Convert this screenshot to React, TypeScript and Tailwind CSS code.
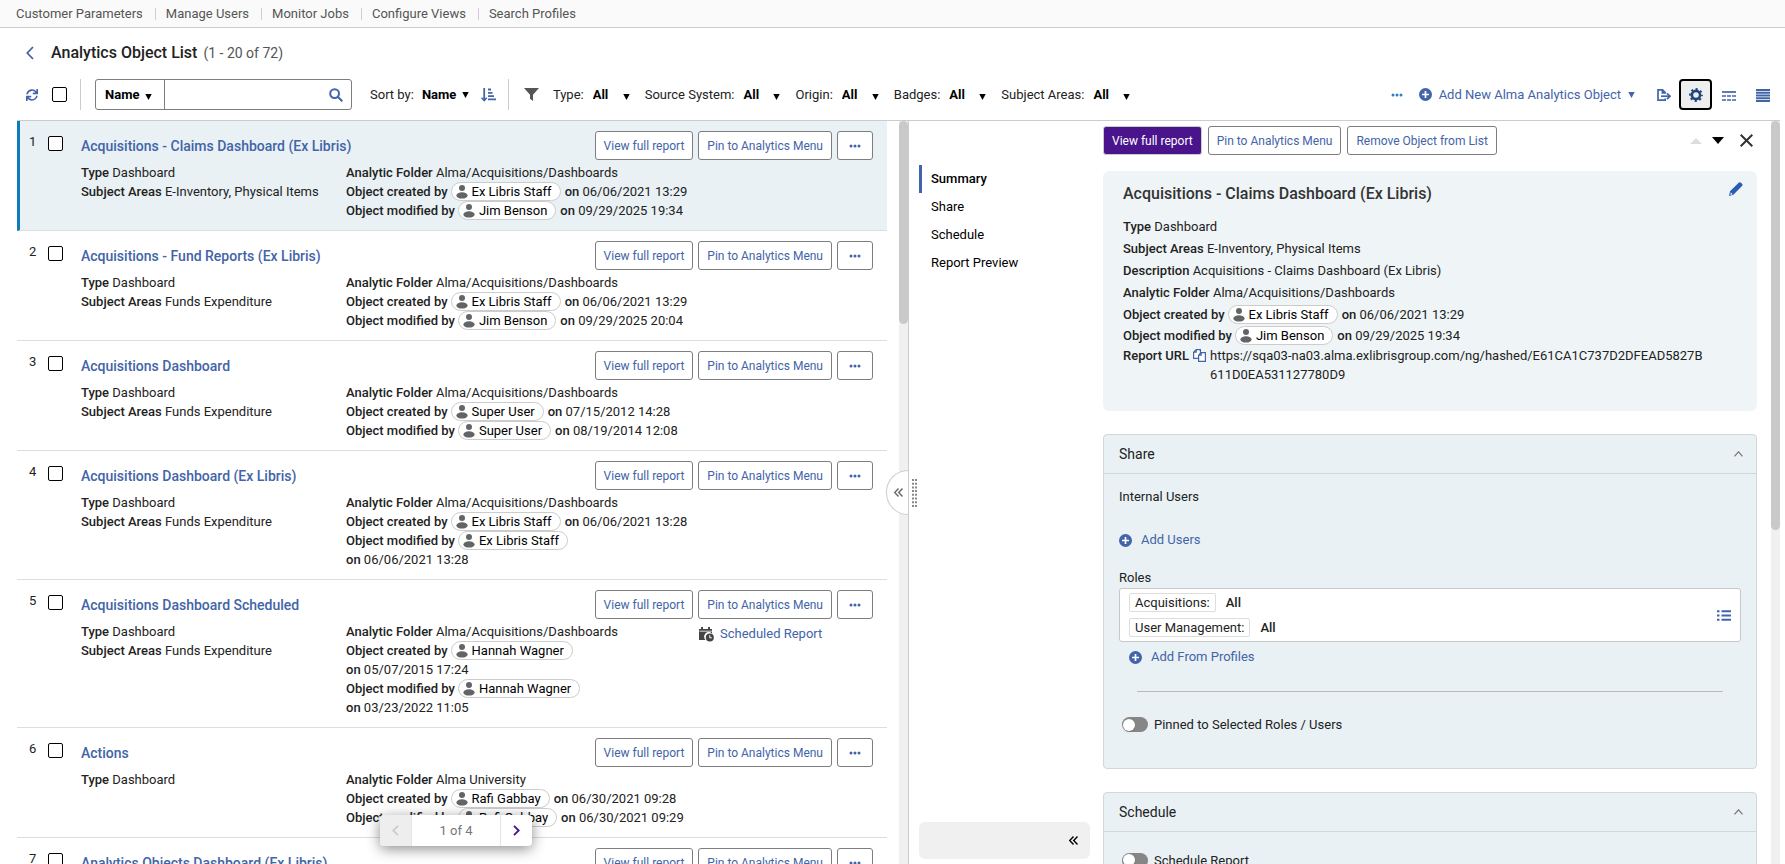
import type { ReactNode } from "react";
import { FaSync } from "react-icons/fa";

type Item = {
  title: string;
  areas?: string;
  folder: string;
  creator: string;
  created: string;
  editor: string;
  modified: string;
  scheduled?: boolean;
};

const items: Item[] = [
  { title: "Acquisitions - Claims Dashboard (Ex Libris)", areas: "E-Inventory, Physical Items", folder: "Alma/Acquisitions/Dashboards", creator: "Ex Libris Staff", created: "06/06/2021 13:29", editor: "Jim Benson", modified: "09/29/2025 19:34" },
  { title: "Acquisitions - Fund Reports (Ex Libris)", areas: "Funds Expenditure", folder: "Alma/Acquisitions/Dashboards", creator: "Ex Libris Staff", created: "06/06/2021 13:29", editor: "Jim Benson", modified: "09/29/2025 20:04" },
  { title: "Acquisitions Dashboard", areas: "Funds Expenditure", folder: "Alma/Acquisitions/Dashboards", creator: "Super User", created: "07/15/2012 14:28", editor: "Super User", modified: "08/19/2014 12:08" },
  { title: "Acquisitions Dashboard (Ex Libris)", areas: "Funds Expenditure", folder: "Alma/Acquisitions/Dashboards", creator: "Ex Libris Staff", created: "06/06/2021 13:28", editor: "Ex Libris Staff", modified: "06/06/2021 13:28" },
  { title: "Acquisitions Dashboard Scheduled", areas: "Funds Expenditure", folder: "Alma/Acquisitions/Dashboards", creator: "Hannah Wagner", created: "05/07/2015 17:24", editor: "Hannah Wagner", modified: "03/23/2022 11:05", scheduled: true },
  { title: "Actions", folder: "Alma University", creator: "Rafi Gabbay", created: "06/30/2021 09:28", editor: "Rafi Gabbay", modified: "06/30/2021 09:29" },
  { title: "Analytics Objects Dashboard (Ex Libris)", areas: "Funds Expenditure", folder: "Alma/Acquisitions/Dashboards", creator: "Ex Libris Staff", created: "06/06/2021 13:28", editor: "Ex Libris Staff", modified: "06/06/2021 13:28" },
];

const outline =
  "flex h-[29px] shrink-0 items-center whitespace-nowrap rounded-[3px] border border-[#7d7d7d] bg-white text-xs text-[#4264a8]";

function Caret({ className = "" }: { className?: string }) {
  return (
    <svg width="7" height="6" viewBox="0 0 7 6" className={`pointer-events-none shrink-0 ${className}`} fill="currentColor">
      <path d="M.3 0h6.4L3.5 6z" />
    </svg>
  );
}

function PlusCircle() {
  return (
    <svg width="13" height="13" viewBox="0 0 13 13" className="shrink-0">
      <circle cx="6.5" cy="6.5" r="6.5" fill="#4264a8" />
      <path d="M6.5 3v7M3 6.5h7" stroke="#fff" strokeWidth="1.7" />
    </svg>
  );
}

function Dots() {
  return (
    <svg width="12" height="4" viewBox="0 0 12 4" fill="currentColor">
      <circle cx="2" cy="2" r="1.5" />
      <circle cx="6" cy="2" r="1.5" />
      <circle cx="10" cy="2" r="1.5" />
    </svg>
  );
}

function Guillemet() {
  return (
    <svg width="9" height="9" viewBox="0 0 9 9" fill="none" stroke="currentColor" strokeWidth="1.4">
      <path d="M4.5.5l-3.8 4 3.8 4M8.5.5l-3.8 4 3.8 4" />
    </svg>
  );
}

function Person({ name }: { name: string }) {
  return (
    <span className="ml-[3px] mr-1 inline-flex h-[19px] items-center gap-1 rounded-full border border-[#ccc] bg-white pl-1 pr-2 align-top text-black">
      <svg width="12" height="14" viewBox="0 0 12 14" fill="#636466">
        <circle cx="6" cy="3" r="3" />
        <ellipse cx="6" cy="10.4" rx="5.6" ry="3.2" />
      </svg>
      {name}
    </span>
  );
}

function Authored({ label, name, date }: { label: string; name: string; date: string }) {
  return (
    <>
      <b className="font-medium">{label}</b>
      <Person name={name} />
      <span className="inline-block whitespace-nowrap">
        <b className="font-medium">on</b> {date}
      </span>
    </>
  );
}

function Checkbox({ label }: { label: string }) {
  return (
    <input type="checkbox" aria-label={label} className="block size-[15px] shrink-0 appearance-none rounded-[2px] border border-black bg-white checked:bg-[#4264a8]" />
  );
}

function ScrollBar({ thumb }: { thumb: ReactNode }) {
  return <div className="w-[9px] shrink-0 bg-[#f0f0f0]">{thumb}</div>;
}

function Row({ item, n, selected }: { item: Item; n: number; selected: boolean }) {
  return (
    <li className={`flex border-b border-[#ddd] pb-2.5 pr-3.5 pt-2.5 ${selected ? "border-l-3 border-l-[#0f7bbd] bg-[#e9f1f4] pl-[9px]" : "pl-3"}`}>
      <span className="w-[19px] shrink-0 pt-px leading-5">{n}</span>
      <div className="shrink-0 pt-[5px]">
        <Checkbox label={`Select ${item.title}`} />
      </div>
      <div className="ml-[18px] min-w-0 grow">
        <div className="flex items-center gap-[5px]">
          <h2 className="grow text-sm font-medium text-[#4264a8]">
            <a href="#summary">{item.title}</a>
          </h2>
          <button className={`${outline} px-2`}>View full report</button>
          <button className={`${outline} px-2`}>Pin to Analytics Menu</button>
          <button aria-label="More actions" className={`${outline} px-[11px]`}>
            <Dots />
          </button>
        </div>
        <div className="mt-[3px] grid grid-cols-[265fr_352fr_175fr] leading-[19px]">
          <div>
            <p>
              <b className="font-medium">Type</b> Dashboard
            </p>
            {item.areas && (
              <p>
                <b className="font-medium">Subject Areas</b> {item.areas}
              </p>
            )}
          </div>
          <div className="pr-1.5">
            <p>
              <b className="font-medium">Analytic Folder</b> {item.folder}
            </p>
            <p>
              <Authored label="Object created by" name={item.creator} date={item.created} />
            </p>
            <p>
              <Authored label="Object modified by" name={item.editor} date={item.modified} />
            </p>
          </div>
          <div>
            {item.scheduled && (
              <a href="#schedule" className="flex items-center gap-1.5 pl-px pt-0.5 text-[#4264a8]">
                <svg width="15" height="16" viewBox="0 0 15 16" fill="#444">
                  <path d="M0 3h2V1h2v2h5V1h2v2h2v4.4A4.6 4.6 0 0 0 6.5 14H0z" />
                  <path d="M.5 5.2h12.4" stroke="#fff" strokeWidth=".8" />
                  <circle cx="10.8" cy="11.6" r="4" />
                  <path d="M10.8 9.2v2.6h2" stroke="#fff" strokeWidth="1" fill="none" />
                </svg>
                Scheduled Report
              </a>
            )}
          </div>
        </div>
      </div>
    </li>
  );
}

function Filter({ label }: { label: string }) {
  return (
    <label className="flex items-center">
      <span className="mr-[9px]">{label}:</span>
      <select className="w-[30px] appearance-none font-bold text-black">
        <option>All</option>
      </select>
      <Caret className="mt-1 text-black" />
    </label>
  );
}

function Toggle({ label }: { label: string }) {
  return (
    <label className="flex items-center gap-1.5">
      <input
        type="checkbox"
        role="switch"
        className="flex h-[15px] w-[26px] appearance-none items-center rounded-full bg-[#868686] before:size-3 before:translate-x-px before:rounded-full before:bg-white before:shadow before:content-[''] checked:bg-[#4264a8] checked:before:translate-x-3"
      />
      {label}
    </label>
  );
}

function Section({ id, title, children }: { id: string; title: string; children: ReactNode }) {
  return (
    <section id={id} className="mt-[23px] rounded border border-[#d0d8db] bg-[#e9f1f4]">
      <button className="flex h-[39px] w-full items-center justify-between border-b border-[#d0d8db] px-[15px] text-sm">
        {title}
        <svg width="9" height="6" viewBox="0 0 9 6" fill="none" stroke="#777" strokeWidth="1.2" className="mr-[-2px]">
          <path d="M.5 5.3l4-4.5 4 4.5" />
        </svg>
      </button>
      {children}
    </section>
  );
}

function Role({ name }: { name: string }) {
  return (
    <div className="flex items-center gap-2.5 leading-[17px]">
      <span className="rounded-[2px] border border-[#ddd] px-[5px]">{name}:</span>
      <b className="font-medium">All</b>
    </div>
  );
}

const links = ["Customer Parameters", "Manage Users", "Monitor Jobs", "Configure Views", "Search Profiles"];

export default function App() {
  return (
    <div className="flex h-screen flex-col overflow-hidden bg-white font-[Roboto,sans-serif] text-[13px] text-[#222]">
      <nav className="flex h-7 shrink-0 items-center border-b border-[#ccc] bg-[#fafafa] pl-4 text-[#555]">
        {links.map((l, i) => (
          <div key={l} className="flex items-center">
            {i > 0 && <span className="ml-3 mr-2.5 h-3 w-px bg-[#ccd]" />}
            <a href="#top">{l}</a>
          </div>
        ))}
      </nav>

      <header className="shrink-0 pl-[17px] pr-[5px]">
        <div className="flex h-[49px] items-center pl-[9px]">
          <button aria-label="Back">
            <svg width="8" height="14" viewBox="0 0 8 14" fill="none" stroke="#4264a8" strokeWidth="1.8">
              <path d="M7 1L1.3 7 7 13" />
            </svg>
          </button>
          <h1 className="ml-[17px] text-base font-medium">Analytics Object List</h1>
          <span className="ml-1.5 text-sm text-[#555]">(1 - 20 of 72)</span>
        </div>

        <div className="flex items-center border-b border-[#ccc] pb-2.5 pl-[9px] pr-2.5 pt-0.5">
          <button aria-label="Refresh" className="mr-3.5">
            <FaSync size={12} color="#4264a8" />
          </button>
          <Checkbox label="Select all" />
          <span className="ml-[13px] mr-3.5 h-[31px] w-px bg-[#ccc]" />
          <div className="flex h-[31px] w-[257px] items-center rounded-[3px] border border-[#7d7d7d]">
            <span className="flex h-full w-[69px] shrink-0 items-center border-r border-[#7d7d7d] pl-[9px]">
              <select aria-label="Search field" className="w-10 appearance-none font-bold text-black">
                <option>Name</option>
              </select>
              <Caret className="mt-1 text-black" />
            </span>
            <input aria-label="Search" className="h-full min-w-0 grow px-2 outline-none" />
            <button aria-label="Run search" className="mr-2">
              <svg width="14" height="14" viewBox="0 0 14 14" fill="none" stroke="#4264a8" strokeWidth="2">
                <circle cx="5.6" cy="5.6" r="4.4" />
                <path d="M9 9l4.3 4.3" />
              </svg>
            </button>
          </div>
          <label className="ml-[18px] flex items-center">
            <span className="mr-2">Sort by:</span>
            <select className="w-10 appearance-none font-bold text-black">
              <option>Name</option>
            </select>
            <Caret className="text-black" />
          </label>
          <button aria-label="Sort direction" className="ml-3">
            <svg width="15" height="14" viewBox="0 0 15 14" fill="none" stroke="#4264a8">
              <path d="M3.2 0v12" strokeWidth="1.8" />
              <path d="M.6 9.8l2.6 2.8 2.6-2.8" strokeWidth="1.5" />
              <path d="M7 1.5h3M7 4.8h4.5M7 8.1h6M7 11.4h8" strokeWidth="1.8" />
            </svg>
          </button>
          <span className="ml-3 mr-[15px] h-[31px] w-px bg-[#ccc]" />
          <svg width="15" height="13" viewBox="0 0 15 13" fill="#555" className="mr-3.5">
            <path d="M0 0h15L9 6.8V13l-3-2.2v-4z" />
          </svg>
          <div className="flex items-center gap-[15px]">
            {["Type", "Source System", "Origin", "Badges", "Subject Areas"].map((f) => (
              <Filter key={f} label={f} />
            ))}
          </div>
          <button aria-label="More" className="ml-auto mr-4 text-[#2f7fc0]">
            <Dots />
          </button>
          <button className="flex items-center text-[#4264a8]">
            <PlusCircle />
            <span className="mx-[7px]">Add New Alma Analytics Object</span>
            <Caret />
          </button>
          <button aria-label="Export" className="ml-[22px]">
            <svg width="14" height="12" viewBox="0 0 14 12" fill="none" stroke="#4264a8" strokeWidth="1.7">
              <path d="M8.2 9.5v1.6H1V.9h4.6l2.6 2.6v1.3M5.4 1v2.8h2.8" />
              <path d="M4 7.2h8" />
              <path d="M10 4.3l3 2.9-3 2.9" />
            </svg>
          </button>
          <button aria-label="Settings" className="ml-2 flex h-[31px] w-[33px] items-center justify-center rounded-[4px] border-2 border-black bg-[#eee]">
            <svg width="14" height="14" viewBox="0 0 14 14" fill="none" stroke="#1d447e">
              <circle cx="7" cy="7" r="4.1" strokeWidth="2.6" />
              <circle cx="7" cy="7" r="6" strokeWidth="1.8" strokeDasharray="2.2 2.512" strokeDashoffset="1.1" />
            </svg>
          </button>
          <button aria-label="Compact view" className="ml-[10px] pt-0.5">
            <svg width="14" height="10" viewBox="0 0 14 10" fill="none" stroke="#4264a8" strokeWidth="1.7">
              <path d="M0 1h14" />
              <path d="M0 5h4M5 5h4M10 5h4M0 9h4M5 9h4M10 9h4" />
            </svg>
          </button>
          <button aria-label="List view" className="ml-5 pt-0.5">
            <svg width="14" height="13" viewBox="0 0 14 13" stroke="#4264a8" strokeWidth="1.8">
              <path d="M0 1h14M0 3.75h14M0 6.5h14M0 9.25h14M0 12h14" />
            </svg>
          </button>
        </div>
      </header>

      <main className="flex min-h-0 grow pl-[17px] pr-[5px]">
        <div className="relative flex min-w-0 flex-1 border-r border-[#ccc]">
          <ul className="min-w-0 grow overflow-hidden">
            {items.map((item, i) => (
              <Row key={item.title} item={item} n={i + 1} selected={i === 0} />
            ))}
          </ul>
          <div className="w-3 shrink-0" />
          <ScrollBar thumb={<div className="h-[203px] rounded-full bg-[#c9c9c9]" />} />
          <button aria-label="Collapse list" className="absolute right-0 top-[349px] flex h-[45px] w-[22px] items-center rounded-l-full border border-r-0 border-[#ccc] bg-white pl-[7px] text-[#666]">
            <Guillemet />
          </button>
          <div className="absolute bottom-[18px] left-[363px] flex h-[31px] w-[152px] items-stretch rounded bg-white shadow-[0_3px_14px_rgba(0,0,0,0.45)]">
            <button aria-label="Previous page" disabled className="flex w-[31px] items-center justify-center rounded-l bg-[#eee]">
              <svg width="7" height="11" viewBox="0 0 7 11" fill="none" stroke="#ccc" strokeWidth="1.8">
                <path d="M6 .8L1.3 5.5 6 10.2" />
              </svg>
            </button>
            <span className="flex grow items-center justify-center border-x border-[#e4e4e4] text-[#777]">1 of 4</span>
            <button aria-label="Next page" className="flex w-[31px] items-center justify-center">
              <svg width="7" height="11" viewBox="0 0 7 11" fill="none" stroke="#4a148c" strokeWidth="1.9">
                <path d="M1 .8l4.7 4.7L1 10.2" />
              </svg>
            </button>
          </div>
        </div>

        <div className="flex w-[871px] shrink-0">
          <div className="flex w-2.5 shrink-0 flex-col pl-[3px] pt-[358px]">
            <svg width="5" height="28" viewBox="0 0 5 28" stroke="#888" strokeWidth="2" strokeDasharray="2 1.7">
              <path d="M1 0v28M4 0v28" />
            </svg>
          </div>
          <aside className="flex w-[171px] shrink-0 flex-col pb-[5px] pt-11 text-black">
            {["Summary", "Share", "Schedule", "Report Preview"].map((s, i) => (
              <a key={s} href={`#${s.split(" ")[0].toLowerCase()}`} className={`flex h-7 shrink-0 items-center border-l-3 pl-[9px] ${i === 0 ? "border-[#4264a8] font-medium" : "border-transparent"}`}>
                {s}
              </a>
            ))}
            <button aria-label="Collapse navigation" className="mt-auto flex h-[37px] items-center justify-end rounded-md bg-[#f0f0f0] pr-3">
              <Guillemet />
            </button>
          </aside>

          <div className="ml-[13px] min-w-0 grow overflow-hidden pt-[5px]">
            <div className="flex items-center gap-1.5">
              <button className="flex h-[29px] items-center rounded-[3px] border border-[#ccc] bg-[#4a148c] px-2 text-xs text-white">View full report</button>
              <button className={`${outline} px-2`}>Pin to Analytics Menu</button>
              <button className={`${outline} px-2`}>Remove Object from List</button>
              <button aria-label="Previous object" className="ml-auto mr-1">
                <svg width="12" height="6" viewBox="0 0 12 6" fill="#ddd">
                  <path d="M0 6h12L6 0z" />
                </svg>
              </button>
              <button aria-label="Next object">
                <svg width="12" height="7" viewBox="0 0 12 7" fill="#000">
                  <path d="M0 0h12L6 7z" />
                </svg>
              </button>
              <button aria-label="Close" className="ml-2.5 mr-1">
                <svg width="13" height="13" viewBox="0 0 13 13" stroke="#333" strokeWidth="2">
                  <path d="M.7.7l11.6 11.6M12.3.7L.7 12.3" />
                </svg>
              </button>
            </div>

            <section id="summary" className="mt-4 rounded-md bg-[#eff5f7] px-5 pb-[27px] pt-[11px]">
              <div className="flex items-start justify-between">
                <h2 className="text-base font-medium leading-6 text-[#333]">Acquisitions - Claims Dashboard (Ex Libris)</h2>
                <button aria-label="Edit" className="mr-[-6px]">
                  <svg width="14" height="14" viewBox="0 0 14 14" fill="#2a5bb5">
                    <path d="M1 9.3L9.7.8c.8-.8 1.6-.7 2.3 0l1 1c.7.7.7 1.5 0 2.3L4.4 12.7 0 14z" />
                    <path d="M1.7 10.3l2 2-2.2.7z" fill="#eff5f7" />
                  </svg>
                </button>
              </div>
              <div className="mt-2.5 leading-[22px]">
                <p>
                  <b className="font-medium">Type</b> Dashboard
                </p>
                <p>
                  <b className="font-medium">Subject Areas</b> E-Inventory, Physical Items
                </p>
                <p>
                  <b className="font-medium">Description</b> Acquisitions - Claims Dashboard (Ex Libris)
                </p>
                <p>
                  <b className="font-medium">Analytic Folder</b> Alma/Acquisitions/Dashboards
                </p>
                <p className="flex h-[21px] items-center">
                  <Authored label="Object created by" name="Ex Libris Staff" date="06/06/2021 13:29" />
                </p>
                <p className="flex h-[21px] items-center">
                  <Authored label="Object modified by" name="Jim Benson" date="09/29/2025 19:34" />
                </p>
                <div className="flex leading-[19px]">
                  <b className="font-medium">Report URL</b>
                  <button aria-label="Copy URL" className="mx-1 self-start pt-[3px]">
                    <svg width="13" height="13" viewBox="0 0 13 13" fill="#fff" stroke="#4264a8" strokeWidth="1.2">
                      <path d="M3.2.6h4.2v8.8H.6V3.2zM3.2.6v2.6H.6" />
                      <path d="M8.2 3.6h4.2v8.8H5.6V6.2zM8.2 3.6v2.6H5.6" />
                    </svg>
                  </button>
                  <span className="w-[494px] break-all">https://sqa03-na03.alma.exlibrisgroup.com/ng/hashed/E61CA1C737D2DFEAD5827B611D0EA531127780D9</span>
                </div>
              </div>
            </section>

            <Section id="share" title="Share">
              <div className="px-[15px] pb-[33px] pt-3.5">
                <h3 className="leading-[18px]">Internal Users</h3>
                <button className="mt-[25px] flex items-center gap-[9px] leading-[18px] text-[#4264a8]">
                  <PlusCircle />
                  Add Users
                </button>
                <h3 className="mt-5 leading-[18px]">Roles</h3>
                <div className="mt-px flex items-center justify-between rounded-[3px] border border-[#c8c8c8] bg-white px-[9px] py-1">
                  <div className="flex flex-col gap-1.5">
                    <Role name="Acquisitions" />
                    <Role name="User Management" />
                  </div>
                  <button aria-label="Choose roles">
                    <svg width="14" height="11" viewBox="0 0 14 11" stroke="#4264a8" strokeWidth="2">
                      <path d="M0 1.2h2.5M4.5 1.2H14M0 5.5h2.5M4.5 5.5H14M0 9.8h2.5M4.5 9.8H14" />
                    </svg>
                  </button>
                </div>
                <button className="ml-2.5 mt-1.5 flex items-center gap-[9px] leading-[18px] text-[#4264a8]">
                  <PlusCircle />
                  Add From Profiles
                </button>
                <hr className="mx-[18px] mb-[23px] mt-[25px] border-[#bbb]" />
                <div className="pl-[3px]">
                  <Toggle label="Pinned to Selected Roles / Users" />
                </div>
              </div>
            </Section>

            <Section id="schedule" title="Schedule">
              <div className="px-[18px] pb-9 pt-[19px]">
                <Toggle label="Schedule Report" />
              </div>
            </Section>
          </div>
          <div className="w-3.5 shrink-0" />
          <ScrollBar thumb={<div className="h-[409px] rounded-full bg-[#c9c9c9]" />} />
        </div>
      </main>
    </div>
  );
}
